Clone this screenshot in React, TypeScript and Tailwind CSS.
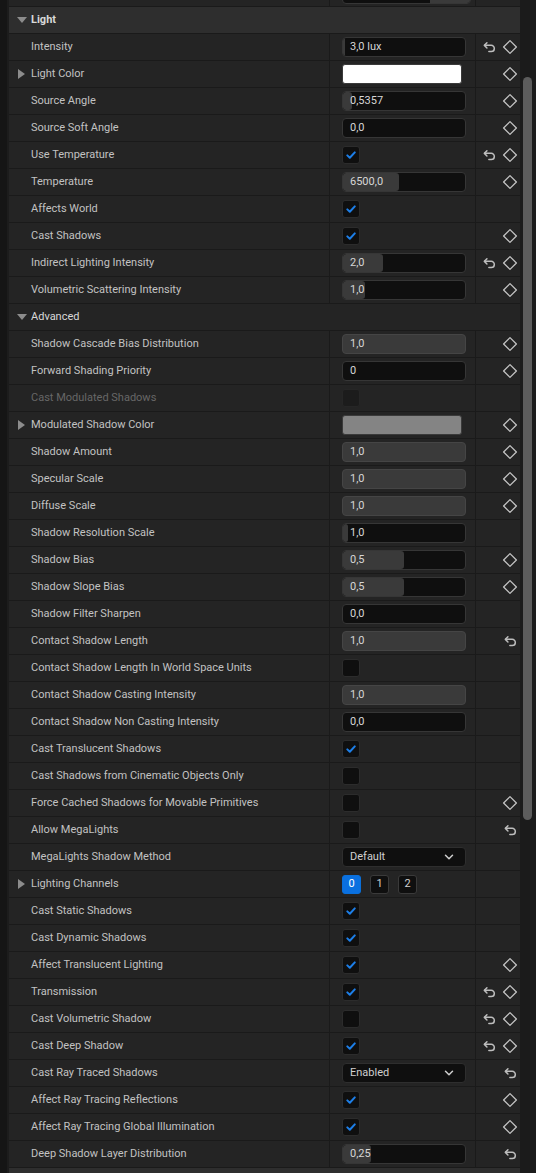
type Kind = 'num' | 'color' | 'check' | 'combo' | 'channels' | 'header';

type Row = {
  label: string;
  kind: Kind;
  value?: string;
  fill?: number;
  checked?: boolean;
  color?: string;
  expand?: boolean;
  disabled?: boolean;
  reset?: boolean;
  key?: boolean;
  dark?: boolean;
};

const rows: Row[] = [
  { label: 'Intensity', kind: 'num', value: '3,0 lux', fill: 2, reset: true, key: true },
  { label: 'Light Color', kind: 'color', color: '#ffffff', expand: true, key: true },
  { label: 'Source Angle', kind: 'num', value: '0,5357', fill: 9, key: true },
  { label: 'Source Soft Angle', kind: 'num', value: '0,0', fill: 0, key: true },
  { label: 'Use Temperature', kind: 'check', checked: true, reset: true, key: true },
  { label: 'Temperature', kind: 'num', value: '6500,0', fill: 56, key: true },
  { label: 'Affects World', kind: 'check', checked: true },
  { label: 'Cast Shadows', kind: 'check', checked: true, key: true },
  { label: 'Indirect Lighting Intensity', kind: 'num', value: '2,0', fill: 40, reset: true, key: true },
  { label: 'Volumetric Scattering Intensity', kind: 'num', value: '1,0', fill: 22, key: true },
  { label: 'Advanced', kind: 'header', dark: true },
  { label: 'Shadow Cascade Bias Distribution', kind: 'num', value: '1,0', fill: 124, key: true },
  { label: 'Forward Shading Priority', kind: 'num', value: '0', fill: 0, key: true },
  { label: 'Cast Modulated Shadows', kind: 'check', checked: false, disabled: true },
  { label: 'Modulated Shadow Color', kind: 'color', color: '#848484', expand: true, key: true },
  { label: 'Shadow Amount', kind: 'num', value: '1,0', fill: 124, key: true },
  { label: 'Specular Scale', kind: 'num', value: '1,0', fill: 124, key: true },
  { label: 'Diffuse Scale', kind: 'num', value: '1,0', fill: 124, key: true },
  { label: 'Shadow Resolution Scale', kind: 'num', value: '1,0', fill: 5 },
  { label: 'Shadow Bias', kind: 'num', value: '0,5', fill: 61, key: true },
  { label: 'Shadow Slope Bias', kind: 'num', value: '0,5', fill: 61, key: true },
  { label: 'Shadow Filter Sharpen', kind: 'num', value: '0,0', fill: 0 },
  { label: 'Contact Shadow Length', kind: 'num', value: '1,0', fill: 124, reset: true },
  { label: 'Contact Shadow Length In World Space Units', kind: 'check', checked: false },
  { label: 'Contact Shadow Casting Intensity', kind: 'num', value: '1,0', fill: 124 },
  { label: 'Contact Shadow Non Casting Intensity', kind: 'num', value: '0,0', fill: 0 },
  { label: 'Cast Translucent Shadows', kind: 'check', checked: true },
  { label: 'Cast Shadows from Cinematic Objects Only', kind: 'check', checked: false },
  { label: 'Force Cached Shadows for Movable Primitives', kind: 'check', checked: false, key: true },
  { label: 'Allow MegaLights', kind: 'check', checked: false, reset: true },
  { label: 'MegaLights Shadow Method', kind: 'combo', value: 'Default' },
  { label: 'Lighting Channels', kind: 'channels', expand: true },
  { label: 'Cast Static Shadows', kind: 'check', checked: true },
  { label: 'Cast Dynamic Shadows', kind: 'check', checked: true },
  { label: 'Affect Translucent Lighting', kind: 'check', checked: true, key: true },
  { label: 'Transmission', kind: 'check', checked: true, reset: true, key: true },
  { label: 'Cast Volumetric Shadow', kind: 'check', checked: false, reset: true, key: true },
  { label: 'Cast Deep Shadow', kind: 'check', checked: true, reset: true, key: true },
  { label: 'Cast Ray Traced Shadows', kind: 'combo', value: 'Enabled', reset: true },
  { label: 'Affect Ray Tracing Reflections', kind: 'check', checked: true, key: true },
  { label: 'Affect Ray Tracing Global Illumination', kind: 'check', checked: true, key: true },
  { label: 'Deep Shadow Layer Distribution', kind: 'num', value: '0,25', fill: 28, reset: true },
];

function ResetIcon() {
  return (
    <svg width="15" height="15" viewBox="0 0 14 14" fill="none" stroke="#bdbdbd" strokeWidth="1.4" strokeLinecap="round" strokeLinejoin="round">
      <path d="M4.6 2.6 2.2 5l2.4 2.4" />
      <path d="M2.4 5h6.2a2.9 2.9 0 0 1 0 5.8H6.4" />
    </svg>
  );
}

function KeyIcon() {
  return (
    <svg width="16" height="16" viewBox="0 0 15 15" fill="none" stroke="#c4c4c4" strokeWidth="1.2" strokeLinejoin="round">
      <path d="M7.5 1.5 13.5 7.5 7.5 13.5 1.5 7.5Z" />
    </svg>
  );
}

function Check() {
  return (
    <svg width="12" height="12" viewBox="0 0 12 12" fill="none" stroke="#1d7fe8" strokeWidth="2" strokeLinecap="round" strokeLinejoin="round">
      <path d="M2.3 6.4 4.8 8.8 9.8 3.4" />
    </svg>
  );
}

function Chevron() {
  return (
    <svg width="12" height="12" viewBox="0 0 12 12" fill="none" stroke="#cfcfcf" strokeWidth="1.5" strokeLinecap="round" strokeLinejoin="round">
      <path d="M2.5 4.3 6 7.8l3.5-3.5" />
    </svg>
  );
}

function ArrowRight() {
  return <div className="h-0 w-0 border-y-[5px] border-l-[7px] border-y-transparent border-l-[#8c8c8c]" />;
}

function ArrowDown() {
  return <div className="h-0 w-0 border-x-[5px] border-t-[6px] border-x-transparent border-t-[#8c8c8c]" />;
}

function NumBox({ value, fill }: { value: string; fill: number }) {
  const full = fill >= 124;
  return (
    <div className={`relative flex h-[20px] w-[124px] items-center overflow-hidden rounded-[4px] border ${full ? 'border-[#454545] bg-[#3a3a3a]' : 'border-[#363636] bg-[#0f0f0f]'}`}>
      {!full && fill > 0 && (
        <div className="absolute inset-y-0 left-0 rounded-[3px] bg-[#3a3a3a]" style={{ width: fill }} />
      )}
      <span className="relative pl-[7px] text-[11px] text-[#d6d6d6]">{value}</span>
    </div>
  );
}

function CheckBox({ checked, disabled }: { checked: boolean; disabled?: boolean }) {
  return (
    <div className={`flex h-[18px] w-[18px] items-center justify-center rounded-[3px] border ${disabled ? 'border-[#262626] bg-[#1c1c1c]' : 'border-[#2c2c2c] bg-[#0f0f0f]'}`}>
      {checked && <Check />}
    </div>
  );
}

function Value({ row }: { row: Row }) {
  switch (row.kind) {
    case 'num':
      return <NumBox value={row.value ?? ''} fill={row.fill ?? 0} />;
    case 'color':
      return <div className="h-[20px] w-[120px] rounded-[3px] border border-[#3a3a3a]" style={{ background: row.color }} />;
    case 'check':
      return <CheckBox checked={!!row.checked} disabled={row.disabled} />;
    case 'combo':
      return (
        <div className="flex h-[20px] w-[124px] items-center justify-between rounded-[4px] border border-[#2e2e2e] bg-[#0f0f0f] pl-[7px] pr-[10px]">
          <span className="text-[11px] text-[#d0d0d0]">{row.value}</span>
          <Chevron />
        </div>
      );
    case 'channels':
      return (
        <div className="flex gap-[9px]">
          {['0', '1', '2'].map((c, i) => (
            <div
              key={c}
              className={`flex h-[19px] w-[19px] items-center justify-center rounded-[3px] border text-[11px] ${i === 0 ? 'border-[#0a6fd9] bg-[#0a70e0] text-white' : 'border-[#3a3a3a] bg-[#0f0f0f] text-[#d0d0d0]'}`}
            >
              {c}
            </div>
          ))}
        </div>
      );
    default:
      return null;
  }
}

function Header({ label, dark }: { label: string; dark?: boolean }) {
  return (
    <div className={`flex h-[27px] shrink-0 items-center border-b border-[#1a1a1a] ${dark ? 'bg-[#242424]' : 'bg-[#2e2e2e]'}`}>
      <div className="flex w-[22px] justify-center pl-[3px]">
        <ArrowDown />
      </div>
      <span className={`text-[11px] text-[#d8d8d8] ${dark ? '' : 'font-bold'}`}>{label}</span>
    </div>
  );
}

function PropRow({ row }: { row: Row }) {
  if (row.kind === 'header') return <Header label={row.label} dark={row.dark} />;
  return (
    <div className="flex h-[27px] shrink-0 border-b border-[#1a1a1a]">
      <div className="flex w-[321px] items-center border-r border-[#1a1a1a]">
        <div className="flex w-[22px] justify-center pl-[3px]">{row.expand && <ArrowRight />}</div>
        <span className={`whitespace-nowrap text-[11px] ${row.disabled ? 'text-[#676767]' : 'text-[#c2c2c2]'}`}>{row.label}</span>
      </div>
      <div className="flex w-[146px] items-center border-r border-[#1a1a1a] pl-[12px]">
        <Value row={row} />
      </div>
      <div className="flex flex-1 items-center justify-end gap-[5px] pr-[2px]">
        {row.reset && <ResetIcon />}
        {row.key && <KeyIcon />}
      </div>
    </div>
  );
}

export default function App() {
  return (
    <div
      className="flex h-[1173px] w-[536px] overflow-hidden bg-[#242424]"
      style={{ fontFamily: 'Roboto, "Noto Sans", "Liberation Sans", sans-serif' }}
    >
      <div className="w-[7px] shrink-0 bg-[#151515]" />
      <div className="w-[2px] shrink-0 bg-[#1c1c1c]" />

      <div className="flex w-[511px] shrink-0 flex-col">
        {/* tail of the row above the Light category */}
        <div className="flex h-[7px] shrink-0 overflow-hidden border-b border-[#1a1a1a]">
          <div className="w-[321px] border-r border-[#1a1a1a]" />
          <div className="flex w-[146px] items-end border-r border-[#1a1a1a] pl-[12px]">
            <div className="relative mb-[2px] h-[20px] w-[129px] shrink-0 overflow-hidden rounded-[4px] border border-[#363636] bg-[#0f0f0f]">
              <div className="absolute inset-y-0 right-0 w-[40px] bg-[#3a3a3a]" />
            </div>
          </div>
          <div className="flex-1" />
        </div>

        <Header label="Light" />
        {rows.map((r) => (
          <PropRow key={r.label} row={r} />
        ))}
        <div className="h-[27px] shrink-0 bg-[#2e2e2e]" />
      </div>

      {/* scrollbar */}
      <div className="w-[16px] shrink-0 bg-[#1b1b1b] pl-[3px] pt-[77px]">
        <div className="h-[743px] w-[9px] rounded-full bg-[#5c5c5c]" />
      </div>
    </div>
  );
}
